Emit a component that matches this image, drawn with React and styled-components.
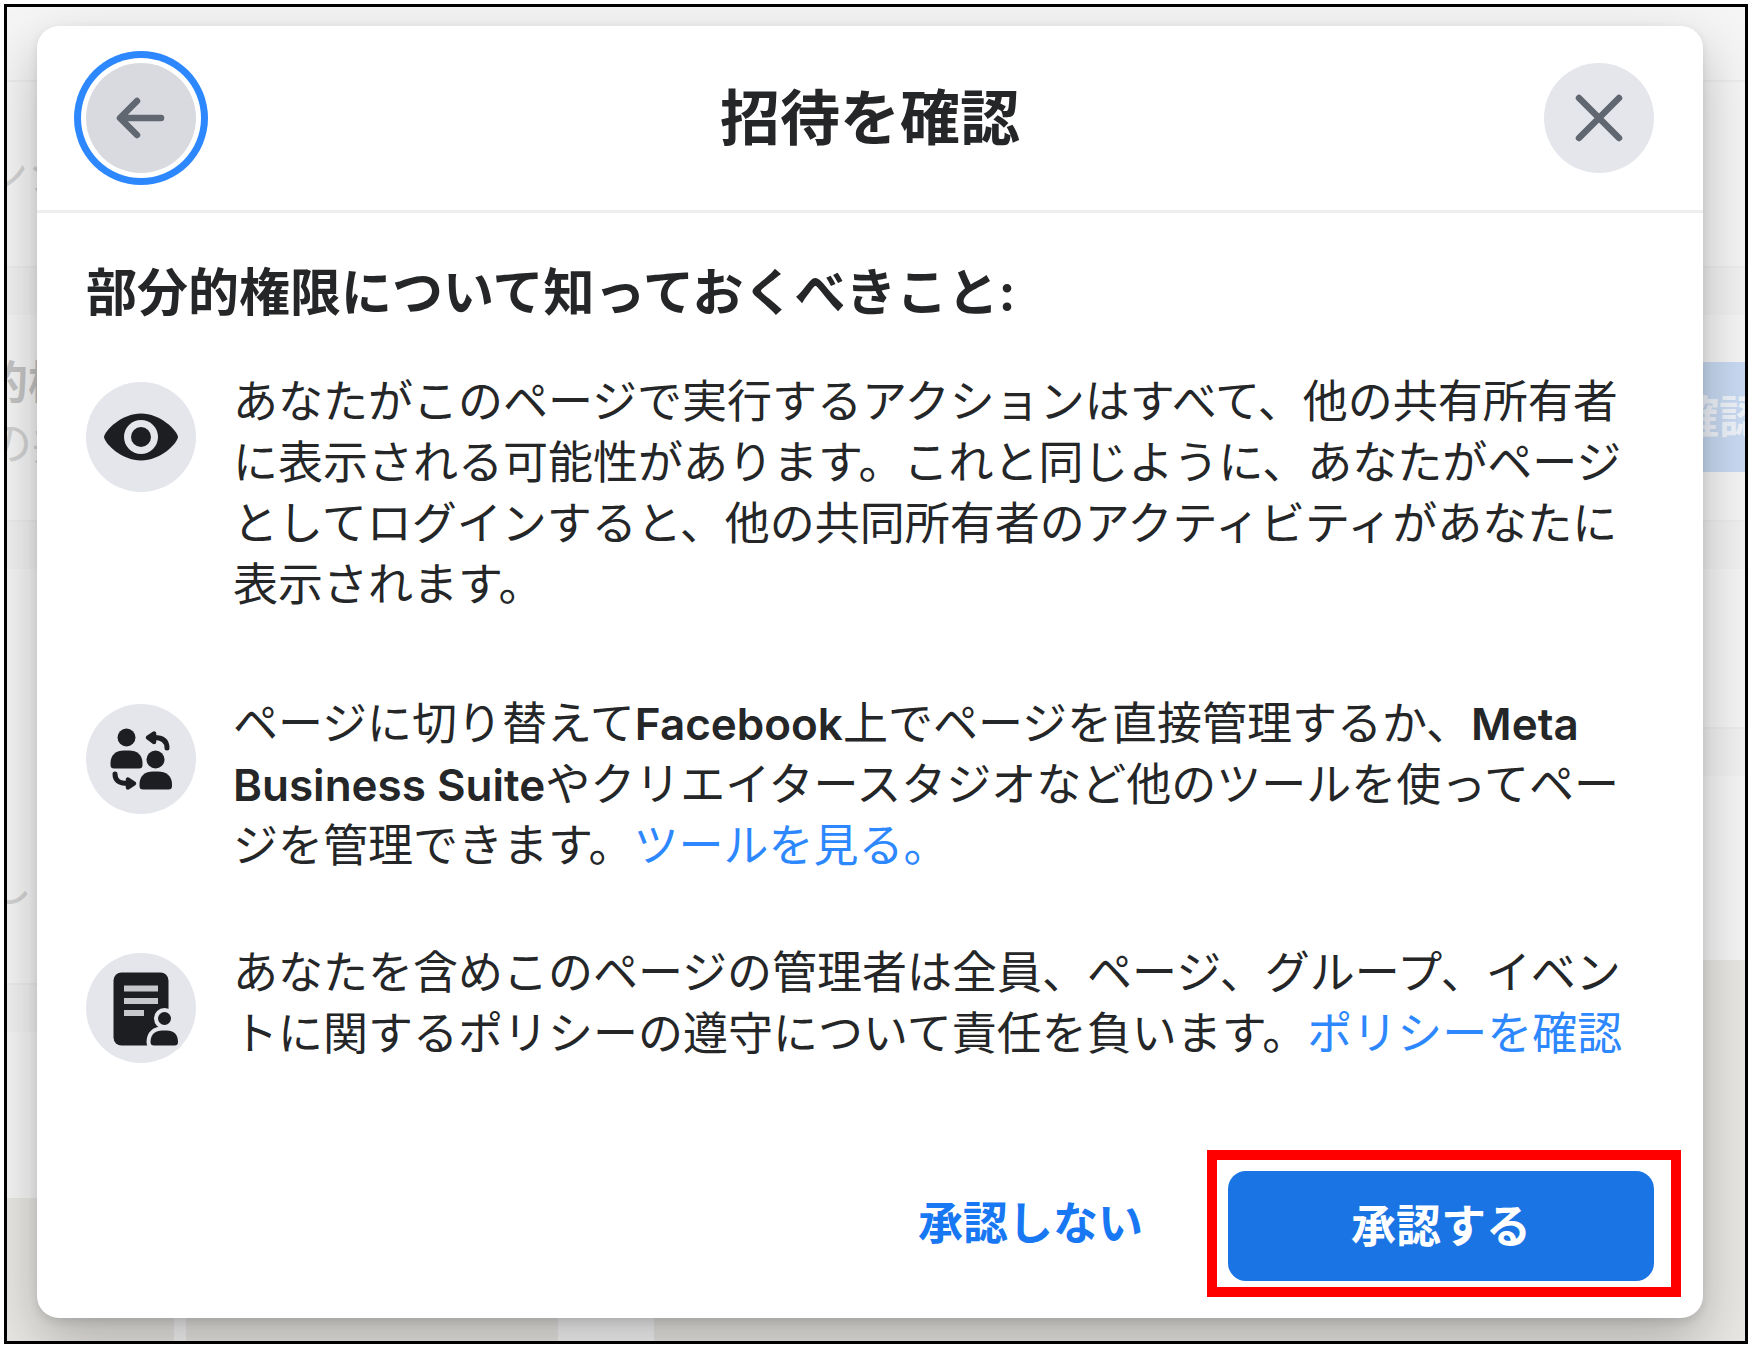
import React from 'react';
//Styles
import styled, { createGlobalStyle } from 'styled-components';

//Icons
const BackIcon = () => (
    <svg width="110" height="110" viewBox="0 0 110 110" aria-hidden="true">
        <path d="M51 38 L34 55 L51 72 M35 55 H75" fill="none" stroke="#606770" strokeWidth="6.500" strokeLinecap="round" strokeLinejoin="round" />
    </svg>
);

const CloseIcon = () => (
    <svg width="110" height="110" viewBox="0 0 110 110" aria-hidden="true">
        <path d="M35 35 L75 75 M75 35 L35 75" fill="none" stroke="#606770" strokeWidth="6.500" strokeLinecap="round" />
    </svg>
);

const EyeIcon = () => (
    <svg width="110" height="110" viewBox="0 0 110 110" aria-hidden="true">
        <path d="M18 55 C19 48 36 31.500 55 31.500 C74 31.500 91 48 92 55 C91 62 74 78.500 55 78.500 C36 78.500 19 62 18 55 Z" fill="#1c1e21" />
        <circle cx="55" cy="55" r="17" fill="#e4e6eb" />
        <circle cx="55" cy="55" r="10" fill="#1c1e21" />
    </svg>
);

const SwitchIcon = () => (
    <svg width="110" height="110" viewBox="0 0 110 110" fill="#1c1e21" aria-hidden="true">
        <circle cx="40.500" cy="33.500" r="9" />
        <path d="M24.500 59 C24.500 51 30 46.500 38 46.500 H43 C51 46.500 56.500 51 56.500 59 V61 Q56.500 64.500 53 64.500 H28 Q24.500 64.500 24.500 61 Z" />
        <circle cx="69.500" cy="55.500" r="9" />
        <path d="M53.500 80 C53.500 72 59 67.500 67 67.500 H72 C80 67.500 86 72 86 80 V82 Q86 85.500 82.500 85.500 H57 Q53.500 85.500 53.500 82 Z" />
        <path d="M68 33.500 C77 33.500 81 37 81 44" fill="none" stroke="#1c1e21" strokeWidth="5" strokeLinecap="round" />
        <path d="M62 33.500 L68 29.500 V38 Z" stroke="#1c1e21" strokeWidth="4.500" strokeLinejoin="round" />
        <path d="M29 70 C29 77 33 79.500 42 79.500" fill="none" stroke="#1c1e21" strokeWidth="5" strokeLinecap="round" />
        <path d="M48 79.500 L42 75.500 V83.500 Z" stroke="#1c1e21" strokeWidth="4.500" strokeLinejoin="round" />
    </svg>
);

const PolicyIcon = () => (
    <svg width="110" height="110" viewBox="0 0 110 110" aria-hidden="true">
        <rect x="27.500" y="19.500" width="55" height="73" rx="8" fill="#1c1e21" />
        <path d="M38 35.500 H72 M38 48 H72 M38 60 H58" stroke="#c6c8cc" strokeWidth="6" />
        <g fill="#1c1e21" stroke="#e4e6eb" strokeWidth="8" paintOrder="stroke">
            <circle cx="78.500" cy="65.500" r="6.500" />
            <path d="M64.500 89 C64.500 81 70 77.500 76 77.500 H81 C87 77.500 92 81 92 89 Q92 92.500 88.500 92.500 H68 Q64.500 92.500 64.500 89 Z" />
        </g>
    </svg>
);

const App = () => {
    //Data
    const items = [
        {
            id: 'visibility',
            icon: <EyeIcon />,
            text: 'あなたがこのページで実行するアクションはすべて、他の共有所有者に表示される可能性があります。これと同じように、あなたがページとしてログインすると、他の共同所有者のアクティビティがあなたに表示されます。'
        },
        {
            id: 'tools',
            icon: <SwitchIcon />,
            text: (
                <>
                    ページに切り替えて<b>Facebook</b>上でページを直接管理するか、<b>Meta Business Suite</b>やクリエイタースタジオなど他のツールを使ってページを管理できます。<TextLink href="#tools">ツールを見る。</TextLink>
                </>
            )
        },
        {
            id: 'policy',
            icon: <PolicyIcon />,
            text: (
                <>
                    あなたを含めこのページの管理者は全員、ページ、グループ、イベントに関するポリシーの遵守について責任を負います。<TextLink href="#policy">ポリシーを確認</TextLink>
                </>
            )
        }
    ];

    return (
        <>
            <GlobalStyle />
            <Frame>
                <Backdrop>
                    <Column>
                        <Panel $height={75} $line />
                        <Panel $height={186} $line $top={62}>
                            <PageText $indent={-24}>ンシ</PageText>
                        </Panel>
                        <Gap />
                        <Panel $height={207} $line $top={37}>
                            <PageText $indent={-24} $bold>的権</PageText>
                            <PageText $indent={-20}>の共</PageText>
                        </Panel>
                        <Gap />
                        <Panel $height={416} $line $top={286}>
                            <PageText $indent={-20}>し</PageText>
                        </Panel>
                        <Gap />
                        <Panel $height={166} />
                        <Photo>
                            <Stripe $left={167} $width={12} />
                            <Stripe $left={551} $width={96} />
                        </Photo>
                    </Column>
                    <Column>
                        <Panel $height={75} $line />
                        <Panel $height={186} $line />
                        <Gap />
                        <Panel $height={207} $line $top={47}>
                            <PageButton type="button">確認</PageButton>
                        </Panel>
                        <Gap />
                        <Panel $height={160} $line />
                        <Gap />
                        <Panel $height={184} />
                        <Photo />
                    </Column>
                </Backdrop>
                <Dialog role="dialog" aria-labelledby="dialog-title">
                    <Header>
                        <RoundButton type="button" aria-label="戻る" $focused>
                            <BackIcon />
                        </RoundButton>
                        <h1 id="dialog-title">招待を確認</h1>
                        <RoundButton type="button" aria-label="閉じる">
                            <CloseIcon />
                        </RoundButton>
                    </Header>
                    <Content>
                        <h2>部分的権限について知っておくべきこと:</h2>
                        <List>
                            {items.map(item => (
                                <Item key={item.id}>
                                    <IconCircle>{item.icon}</IconCircle>
                                    <p>{item.text}</p>
                                </Item>
                            ))}
                        </List>
                    </Content>
                    <Footer>
                        <DeclineButton type="button">承認しない</DeclineButton>
                        <Highlight>
                            <AcceptButton type="button">承認する</AcceptButton>
                        </Highlight>
                    </Footer>
                </Dialog>
            </Frame>
        </>
    );
};

const GlobalStyle = createGlobalStyle`
    * {
        box-sizing: border-box;
        margin: 0;
        padding: 0;
    }
    body {
        padding: 4px 2px 3px 4px;
        background: white;
        color: #242628;
        font-family: Inter, "Noto Sans CJK JP", sans-serif;
        font-size: 45px;
        line-height: 61px;
    }
    button {
        border: none;
        font: inherit;
        cursor: pointer;
    }
`;

const Frame = styled.main`
    display: grid;
    grid-template-columns: minmax(0, 1fr);
    min-height: calc(100vh - 7px);
    border: 3px solid black;
    overflow: hidden;
`;

const Backdrop = styled.div`
    grid-area: 1 / 1;
    display: grid;
    grid-template-columns: 1fr 1fr;
    min-width: 0;
    overflow: hidden;
    background: #f5f5f5;
`;

const Column = styled.div`
    display: flex;
    flex-direction: column;
    min-width: 0;
`;

const Panel = styled.div`
    display: flex;
    flex-direction: column;
    height: ${({ $height }) => $height}px;
    padding-top: ${({ $top }) => $top || 0}px;
    background: #f5f5f5;
    border-bottom: ${({ $line }) => ($line ? '2px solid #eceeee' : 'none')};
`;

const Gap = styled.div`
    height: 47px;
    background: #f1f1f1;
`;

const PageText = styled.span`
    margin-left: ${({ $indent }) => $indent}px;
    color: ${({ $bold }) => ($bold ? '#c4c4c4' : '#d2d2d2')};
    font-weight: ${({ $bold }) => ($bold ? 600 : 400)};
    white-space: nowrap;
`;

const PageButton = styled.button`
    align-self: flex-end;
    width: 240px;
    height: 110px;
    margin-right: -94px;
    border-radius: 18px;
    background: #c8daf2;
    color: #eef3fa;
    font-weight: 700;
`;

const Photo = styled.div`
    position: relative;
    flex: 1;
    background: #e8e7e4;
`;

const Stripe = styled.span`
    position: absolute;
    top: 0;
    bottom: 0;
    left: ${({ $left }) => $left}px;
    width: ${({ $width }) => $width}px;
    background: #f5f5f5;
`;

const Dialog = styled.section`
    grid-area: 1 / 1;
    z-index: 1;
    display: flex;
    flex-direction: column;
    margin: 19px 42px 23px 30px;
    border-radius: 22px;
    background: white;
    box-shadow: 0 24px 56px rgba(0, 0, 0, 0.25), 0 4px 10px rgba(0, 0, 0, 0.1);
`;

const Header = styled.header`
    display: flex;
    align-items: center;
    justify-content: space-between;
    height: 187px;
    padding: 0 49px;
    border-bottom: 3px solid #eeeeee;
    h1 {
        font-size: 60px;
        font-weight: 700;
    }
`;

const RoundButton = styled.button`
    display: flex;
    width: 110px;
    height: 110px;
    border-radius: 50%;
    background: ${({ $focused }) => ($focused ? '#d8dadf' : '#e4e6eb')};
    box-shadow: ${({ $focused }) => ($focused ? '0 0 0 5px white, 0 0 0 12px #2d88ff' : 'none')};
`;

const Content = styled.div`
    display: flex;
    flex-direction: column;
    gap: 48px;
    padding: 49px 49px 0;
    h2 {
        font-size: 51px;
        font-weight: 700;
    }
`;

const List = styled.ul`
    display: flex;
    flex-direction: column;
    gap: 66px;
    list-style: none;
`;

const Item = styled.li`
    display: flex;
    align-items: flex-start;
    gap: 37px;
    &:first-child {
        padding-bottom: 12px;
    }
    p {
        flex: 1;
        min-width: 0;
    }
    b {
        font-size: 44px;
        font-weight: 600;
        line-height: 1;
    }
`;

const IconCircle = styled.span`
    display: flex;
    flex: none;
    width: 110px;
    height: 110px;
    margin-top: 11px;
    border-radius: 50%;
    background: #e4e6eb;
`;

const TextLink = styled.a`
    color: #2d88ff;
    text-decoration: none;
`;

const Footer = styled.footer`
    display: flex;
    align-items: center;
    justify-content: flex-end;
    gap: 32px;
    margin-top: auto;
    padding: 0 22px 21px;
`;

const DeclineButton = styled.button`
    height: 110px;
    padding: 0 32px;
    background: none;
    color: #1877f2;
    font-weight: 600;
`;

const Highlight = styled.div`
    display: flex;
    padding: 11px 17px 6px 11px;
    border: 10px solid #ff0000;
`;

const AcceptButton = styled.button`
    width: 426px;
    height: 110px;
    border-radius: 18px;
    background: #1a74e4;
    color: white;
    font-weight: 600;
`;

export default App;
